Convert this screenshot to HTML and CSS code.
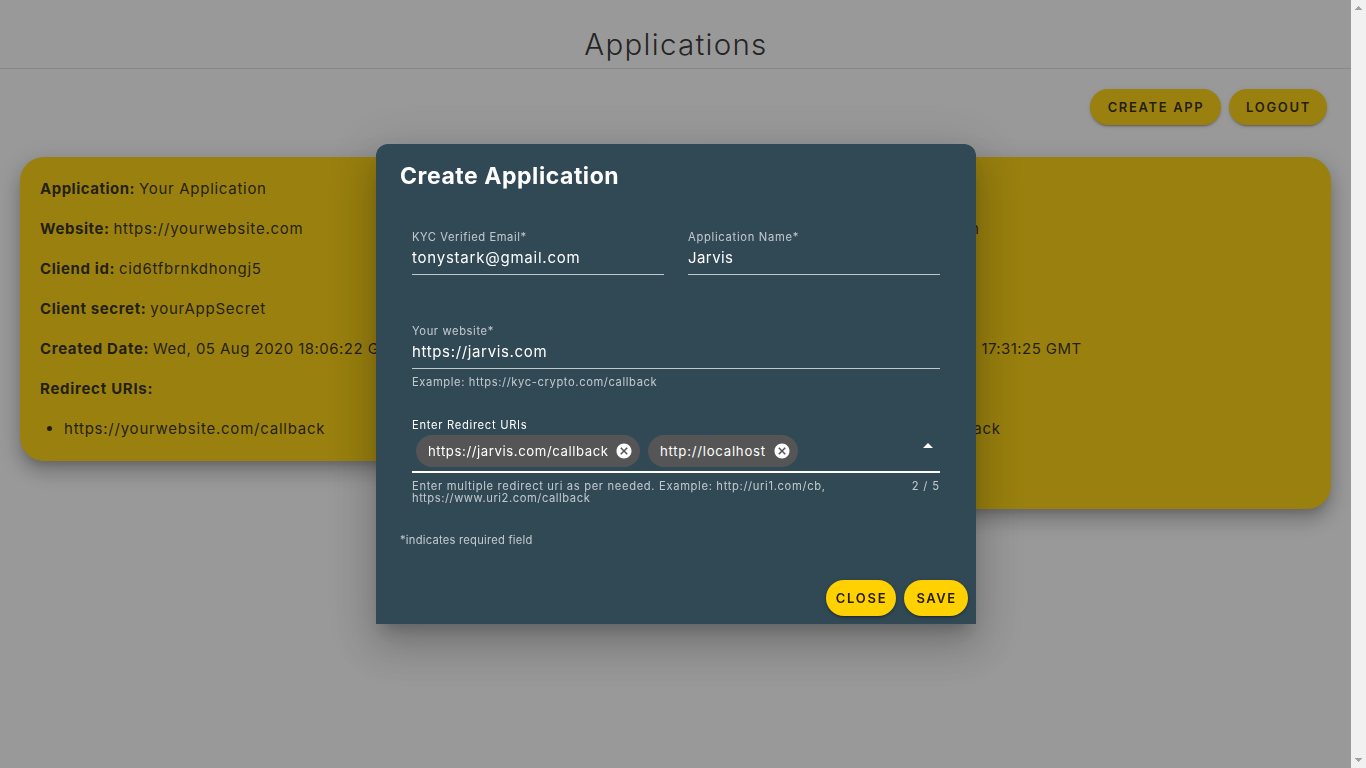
FILE: index.html
```html
<!DOCTYPE html>
<html lang="en">
<head>
<meta charset="utf-8">
<title>Applications</title>
<link rel="stylesheet" href="styles.css">
</head>
<body>
<div class="window">
  <main class="page">
    <h1 class="page-title">Applications</h1>
    <div class="toolbar">
      <button class="btn btn-create">Create App</button>
      <button class="btn btn-logout">Logout</button>
    </div>
    <div class="cards">
      <section class="card">
        <p class="row"><b class="t50">Application:</b><span class="t72">Your Application</span></p>
        <p class="row"><b class="t58">Website:</b><span class="t78">https://yourwebsite.com</span></p>
        <p class="row"><b class="t61">Cliend id:</b><span class="t72">cid6tfbrnkdhongj5</span></p>
        <p class="row"><b class="t61">Client secret:</b><span class="t78">yourAppSecret</span></p>
        <p class="row"><b class="t65">Created Date:</b><span class="t48">Wed, 05 Aug 2020 18:06:22 GMT</span></p>
        <p class="row"><b class="t72">Redirect URIs:</b></p>
        <ul class="uris"><li class="t78">https://yourwebsite.com/callback</li></ul>
      </section>
      <section class="card">
        <p class="row"><b class="t50">Application:</b><span class="t72">Your Application</span></p>
        <p class="row"><b class="t65">Website:</b><span class="t78">https://yourwebsite.com</span></p>
        <p class="row"><b class="t61">Cliend id:</b><span class="t72">cid6tfbrnkdhongj5</span></p>
        <p class="row"><b class="t61">Client secret:</b><span class="t78">yourAppSecret</span></p>
        <p class="row created"><b class="t65">Created Date:</b><span class="t43">Wed, 05 Aug 2020 17:31:25 GMT</span></p>
        <p class="row"><b class="t72">Redirect URIs:</b></p>
        <ul class="uris">
          <li class="t78">https://yourwebsite.com/callback</li>
          <li class="t78">http://localhost</li>
          <li class="t78">http://localhost</li>
        </ul>
      </section>
    </div>
  </main>
  <div class="scrollbar">
    <svg width="15" height="15" viewBox="0 0 15 15"><path d="M4 10h7v-1h-1V8H9V7H8V6H7v1H6v1H5v1H4z"/></svg>
    <svg width="15" height="15" viewBox="0 0 15 15"><path d="M4 5h7v1h-1v1H9v1H8v1H7V8H6V7H5V6H4z"/></svg>
  </div>
</div>

<div class="scrim"></div>
<div class="overlay">
  <div class="dialog">
    <h2 class="dialog-title">Create Application</h2>
    <div class="fields">
      <div class="pair">
        <div class="field"><label class="label t56">KYC Verified Email*</label><div class="value t78">tonystark@gmail.com</div></div>
        <div class="field"><label class="label t71">Application Name*</label><div class="value t43">Jarvis</div></div>
      </div>
      <div class="field website">
        <label class="label t61">Your website*</label><div class="value t65">https://jarvis.com</div>
        <div class="hint t61">Example: https://kyc-crypto.com/callback</div>
      </div>
      <div class="field redirect">
        <label class="label active t71">Enter Redirect URIs</label>
        <div class="select">
          <span class="chip chip-a"><span class="t58">https://jarvis.com/callback</span><svg class="close" viewBox="0 0 24 24"><path d="M12 2C6.47 2 2 6.47 2 12s4.47 10 10 10 10-4.47 10-10S17.53 2 12 2m5 13.59L15.59 17 12 13.41 8.41 17 7 15.59 10.59 12 7 8.41 8.41 7 12 10.59 15.59 7 17 8.41 13.41 12z"/></svg></span>
          <span class="chip chip-b"><span class="t75">http://localhost</span><svg class="close" viewBox="0 0 24 24"><path d="M12 2C6.47 2 2 6.47 2 12s4.47 10 10 10 10-4.47 10-10S17.53 2 12 2m5 13.59L15.59 17 12 13.41 8.41 17 7 15.59 10.59 12 7 8.41 8.41 7 12 10.59 15.59 7 17 8.41 13.41 12z"/></svg></span>
          <svg class="arrow" viewBox="0 0 24 24"><path d="M7 14l5-5 5 5z"/></svg>
        </div>
        <div class="details">
          <div class="hint"><span class="t66">Enter multiple redirect uri as per needed. Example: http://uri1.com/cb,</span><br><span class="t56">https://www.uri2.com/callback</span></div>
          <div class="hint t88">2 / 5</div>
        </div>
      </div>
    </div>
    <div class="note">*indicates required field</div>
    <div class="actions">
      <button class="btn btn-close">Close</button>
      <button class="btn btn-save">Save</button>
    </div>
  </div>
</div>
</body>
</html>
```
FILE: styles.css
```css
* { box-sizing: border-box; }
html, body { height: 100%; overflow: hidden; }
body { margin: 0; background: #fff; color: rgba(0,0,0,.87); font: 400 15px/24px Inter, "Liberation Sans", sans-serif; }
h1, h2, p, ul { margin: 0; }
.window { display: flex; height: 768px; }
.page { flex: 1; min-width: 0; }
.page-title { height: 69px; padding: 21px 0 0 1px; border-bottom: 1px solid rgba(0,0,0,.12); text-align: center; font-size: 29.5px; line-height: 46px; font-weight: 300; letter-spacing: 1.28px; }
.toolbar { display: flex; justify-content: flex-end; gap: 8px; padding: 20px 24px 0 0; }
.btn { display: flex; align-items: center; justify-content: center; height: 36px; padding: 0; border: 0; border-radius: 18px; background: #ffd100; color: rgba(0,0,0,.87); font: 600 13px/18px Inter, sans-serif; text-transform: uppercase; white-space: nowrap; box-shadow: 0 3px 1px -2px rgba(0,0,0,.2), 0 2px 2px rgba(0,0,0,.14), 0 1px 5px rgba(0,0,0,.12); }
.btn-create { width: 131px; letter-spacing: 1.65px; text-indent: 1px; }
.btn-logout { width: 98px; letter-spacing: 1.65px; text-indent: 1px; }
.cards { display: grid; grid-template-columns: 1fr 1fr; gap: 40px; align-items: start; padding: 32px 20px 0; }
.card { padding: 20px; border-radius: 24px; background: #ffd100; box-shadow: 0 7px 8px -4px rgba(0,0,0,.2), 0 12px 17px 2px rgba(0,0,0,.14), 0 5px 22px 4px rgba(0,0,0,.12); }
.row { display: flex; gap: 3.9px; margin-bottom: 16px; white-space: nowrap; }
.row.created { gap: 12px; }
.row b { font-weight: 700; }
.uris { padding-left: 24px; }
.scrollbar { display: flex; flex-direction: column; justify-content: space-between; width: 15px; background: #f1f1f1; fill: #a3a3a3; }
.scrollbar svg { display: block; }
.scrim { position: fixed; inset: 0 15px 0 0; background: #212121; opacity: .46; }
.overlay { position: fixed; inset: 0 15px 0 0; display: flex; align-items: center; justify-content: center; overflow: hidden; padding-left: 1px; }
.dialog { width: 600px; height: 480px; border-radius: 12px 12px 0 0; background: #314855; color: #fff; box-shadow: 0 11px 15px -7px rgba(0,0,0,.2), 0 24px 38px 3px rgba(0,0,0,.14), 0 9px 46px 8px rgba(0,0,0,.12); display: flex; flex-direction: column; }
.dialog-title { padding: 16px 24px 0; font-size: 23px; line-height: 32px; font-weight: 750; letter-spacing: .55px; }
.fields { padding: 39px 36px 0; }
.pair { display: grid; grid-template-columns: 1fr 1fr; gap: 24px; }
.label { display: block; height: 12px; font-size: 11.2px; line-height: 12px; color: rgba(255,255,255,.7); white-space: nowrap; }
.label.active { color: #fff; }
.value { height: 32px; border-bottom: 1px solid rgba(255,255,255,.7); line-height: 30px; white-space: nowrap; }
.hint { font-size: 11.2px; line-height: 12px; color: rgba(255,255,255,.7); white-space: nowrap; }
.website { margin-top: 50px; }
.website .hint { margin-top: 7px; }
.redirect { margin-top: 31px; }
.select { display: flex; gap: 8px; align-items: flex-start; height: 42px; padding: 4px 0 0 4px; border-bottom: 2px solid #fff; }
.chip { display: flex; align-items: center; justify-content: space-between; height: 32px; padding: 0 7.5px 0 12px; border-radius: 16px; background: #555; font-size: 13.2px; line-height: 20px; white-space: nowrap; }
.chip-a { width: 224px; }
.chip-b { width: 150px; }
.close { flex: none; width: 18px; height: 18px; fill: #fff; }
.arrow { width: 24px; height: 24px; margin: -1px 0 0 auto; fill: #fff; }
.details { display: flex; justify-content: space-between; margin-top: 7px; }
.note { padding: 30px 24px 0; font-size: 11.2px; line-height: 12px; letter-spacing: .24px; color: rgba(255,255,255,.7); }
.actions { display: flex; justify-content: flex-end; gap: 8px; margin-top: auto; padding: 8px; }
.btn-close { width: 70px; letter-spacing: 1.75px; text-indent: 1px; }
.btn-save { width: 64px; letter-spacing: 1.5px; text-indent: 1px; }
.t43 { letter-spacing: .43px; }
.t48 { letter-spacing: .46px; }
.t50 { letter-spacing: .5px; }
.t56 { letter-spacing: .555px; }
.t58 { letter-spacing: .575px; }
.t61 { letter-spacing: .605px; }
.t65 { letter-spacing: .65px; }
.t66 { letter-spacing: .66px; }
.t71 { letter-spacing: .7px; }
.t72 { letter-spacing: .718px; }
.t75 { letter-spacing: .75px; }
.t78 { letter-spacing: .77px; }
.t88 { letter-spacing: .88px; }
```
